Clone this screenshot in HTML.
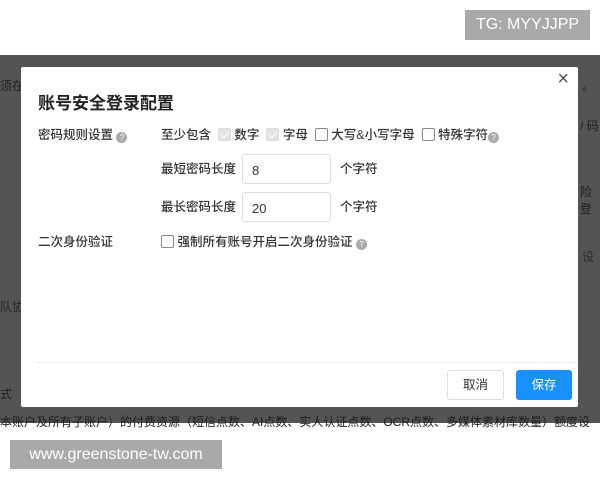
<!DOCTYPE html>
<html><head><meta charset="utf-8"><style>
*{margin:0;padding:0;box-sizing:border-box}
body{width:600px;height:480px;background:#fff;position:relative;overflow:hidden;font-family:"Liberation Sans","Noto Sans CJK SC",sans-serif;color:#333}
.ov{position:absolute;left:0;top:55px;width:600px;height:368px;background:#545454}
.bgt{position:absolute;color:#1e1e1e;font-size:12px}
.modal{position:absolute;left:21px;top:67px;width:557px;height:340px;background:#fff;border-radius:2px}
.a{position:absolute;font-size:12.5px;white-space:nowrap;font-weight:500}
.q{display:inline-block;width:11px;height:11px;border-radius:50%;background:#aaa;color:#fff;font-size:8px;line-height:11px;text-align:center;vertical-align:-1px}
.cb{display:inline-block;width:13px;height:13px;border:1px solid #888;border-radius:2px;vertical-align:-2px;background:#fff;position:relative}
.cbd{background:#e3e3e3;border-color:#ddd}
.cbd::after{content:"";position:absolute;left:3px;top:1px;width:4px;height:7px;border:solid #fff;border-width:0 1.5px 1.5px 0;transform:rotate(45deg)}
.inp{position:absolute;width:89px;height:30px;border:1px solid #ddd;border-radius:3px;font-size:13px;padding:8px 0 0 9px}
.wm{position:absolute;background:#a9a9a9;color:#fff}
</style></head><body>
<div class="wm" style="left:465px;top:10px;width:125px;height:30px;font-size:16px;line-height:30px;text-align:center">TG: MYYJJPP</div>
<div class="ov">
<div class="bgt" style="left:0;top:22px">须在</div>
<div class="bgt" style="left:582px;top:22px">。</div>
<div class="bgt" style="left:580px;top:62px">/ 码</div>
<div class="bgt" style="left:580px;top:128px">险<br>登</div>
<div class="bgt" style="left:582px;top:193px;color:#2a2a35">设</div>
<div class="bgt" style="left:0;top:243px;color:#22222a">队协</div>
<div class="bgt" style="left:0;top:330px">式</div>
<div class="bgt" style="left:0;top:358px">本账户及所有子账户）的付费资源（短信点数、AI点数、实人认证点数、OCR点数、多媒体素材库数量）额度设</div>
</div>
<div class="modal">
<div style="position:absolute;right:9px;top:1px;font-size:20px;color:#555">×</div>
<div class="a" style="left:17px;top:22px;font-size:17px;font-weight:bold;color:#222">账号安全登录配置</div>
<div class="a" style="left:17px;top:57px">密码规则设置 <span class="q">?</span></div>
<div class="a" style="left:140px;top:57px">至少包含 &nbsp;<span class="cb cbd"></span> 数字 &nbsp;<span class="cb cbd"></span> 字母 &nbsp;<span class="cb"></span> 大写&amp;小写字母 &nbsp;<span class="cb"></span> 特殊字符<span class="q">?</span></div>
<div class="a" style="left:140px;top:91px">最短密码长度</div>
<div class="inp" style="left:221px;top:87px">8</div>
<div class="a" style="left:319px;top:91px">个字符</div>
<div class="a" style="left:140px;top:129px">最长密码长度</div>
<div class="inp" style="left:221px;top:125px">20</div>
<div class="a" style="left:319px;top:129px">个字符</div>
<div class="a" style="left:17px;top:164px">二次身份验证</div>
<div class="a" style="left:140px;top:164px"><span class="cb"></span> 强制所有账号开启二次身份验证 <span class="q">?</span></div>
<div style="position:absolute;left:14px;right:0;top:295px;border-top:1px solid #eee"></div>
<div style="position:absolute;left:426px;top:303px;width:57px;height:30px;border:1px solid #ddd;border-radius:3px;font-size:12.5px;text-align:center;line-height:28px">取消</div>
<div style="position:absolute;left:495px;top:303px;width:56px;height:30px;background:#1890ff;border-radius:3px;color:#fff;font-size:12.5px;text-align:center;line-height:30px">保存</div>
</div>
<div class="wm" style="left:10px;top:440px;width:212px;height:29px;font-size:16px;line-height:29px;text-align:center">www.greenstone-tw.com</div>
</body></html>
